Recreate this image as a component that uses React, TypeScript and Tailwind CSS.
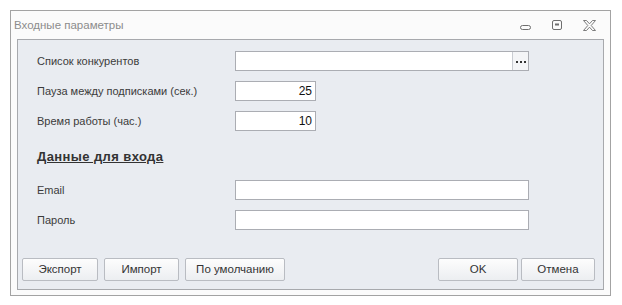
import React from 'react';

const font = { fontFamily: '"Liberation Sans", Arial, sans-serif' };

function Field({ value, width, browse }: { value?: string; width: string; browse?: boolean }) {
  return (
    <div className={`h-[20px] ${width} flex border border-[#abadb3] bg-white`}>
      <div className="flex-1 flex items-center justify-end pr-[3px] text-[12px] text-[#111]">{value}</div>
      {browse && (
        <div className="w-[16px] border-l border-[#c9ccd2] bg-[#f4f5f7] flex items-center justify-center gap-[2px] pt-[2px]">
          <span className="w-[2px] h-[2px] bg-[#333]" />
          <span className="w-[2px] h-[2px] bg-[#333]" />
          <span className="w-[2px] h-[2px] bg-[#333]" />
        </div>
      )}
    </div>
  );
}

function Row({ label, children }: { label: string; children: React.ReactNode }) {
  return (
    <div className="flex items-center">
      <div className="w-[198px] text-[11px] text-[#3b3b3b] leading-none">{label}</div>
      {children}
    </div>
  );
}

function Btn({ label, width }: { label: string; width: string }) {
  return (
    <button className={`h-[23px] ${width} rounded-[2px] border border-[#b9bcc2] bg-gradient-to-b from-[#fdfdfd] to-[#eceef1] text-[11.5px] text-[#333]`}>
      {label}
    </button>
  );
}

export default function App() {
  return (
    <div className="w-[622px] h-[305px] bg-white pt-[10px] pl-[10px]" style={font}>
      <div className="w-[601px] h-[286px] border border-[#a3a3a3] bg-[#fbfbfb] flex flex-col">
        <div className="h-[28px] flex items-center pl-[3px] pr-[13px]">
          <span className="text-[11.5px] text-[#8c8c8c] pt-[2px]">Входные параметры</span>
          <div className="ml-auto flex items-center gap-[19px] text-[#6e6e6e]">
            <svg width="13" height="12" viewBox="0 0 13 12" className="mt-[2px]">
              <rect x="1.5" y="5.5" width="10" height="4" rx="2" fill="none" stroke="currentColor" />
            </svg>
            <svg width="12" height="12" viewBox="0 0 12 12">
              <rect x="1.5" y="1.5" width="9" height="9" rx="1.5" fill="none" stroke="currentColor" />
              <rect x="4" y="4.5" width="4" height="2" fill="currentColor" />
            </svg>
            <svg width="15" height="13" viewBox="0 0 15 13">
              <path
                d="M1.5 1.5 H4.5 L7.5 4.8 L10.5 1.5 H13.5 L9.2 6.5 L13.5 11.5 H10.5 L7.5 8.2 L4.5 11.5 H1.5 L5.8 6.5 Z"
                fill="none"
                stroke="currentColor"
                strokeWidth="0.9"
              />
            </svg>
          </div>
        </div>
        <div className="mx-[6px] mb-[5px] flex-1 border border-[#a7a9ad] bg-[#e9ecf1] flex flex-col pt-[11px] pb-[8px]">
          <div className="pl-[19px] flex flex-col gap-[10px]">
            <Row label="Список конкурентов">
              <Field width="w-[294px]" browse />
            </Row>
            <Row label="Пауза между подписками (сек.)">
              <Field width="w-[81px]" value="25" />
            </Row>
            <Row label="Время работы (час.)">
              <Field width="w-[81px]" value="10" />
            </Row>
          </div>
          <div className="pl-[19px] mt-[16px] h-[20px] flex items-center">
            <span className="text-[13px] font-bold underline text-[#333] tracking-[0.4px]">Данные для входа</span>
          </div>
          <div className="pl-[19px] mt-[13px] flex flex-col gap-[10px]">
            <Row label="Email">
              <Field width="w-[294px]" />
            </Row>
            <Row label="Пароль">
              <Field width="w-[294px]" />
            </Row>
          </div>
          <div className="mt-auto flex items-center pl-[4px] pr-[8px]">
            <div className="flex gap-[6px]">
              <Btn label="Экспорт" width="w-[76px]" />
              <Btn label="Импорт" width="w-[75px]" />
              <Btn label="По умолчанию" width="w-[100px]" />
            </div>
            <div className="ml-auto flex gap-[3px]">
              <Btn label="OK" width="w-[80px]" />
              <Btn label="Отмена" width="w-[74px]" />
            </div>
          </div>
        </div>
      </div>
    </div>
  );
}
